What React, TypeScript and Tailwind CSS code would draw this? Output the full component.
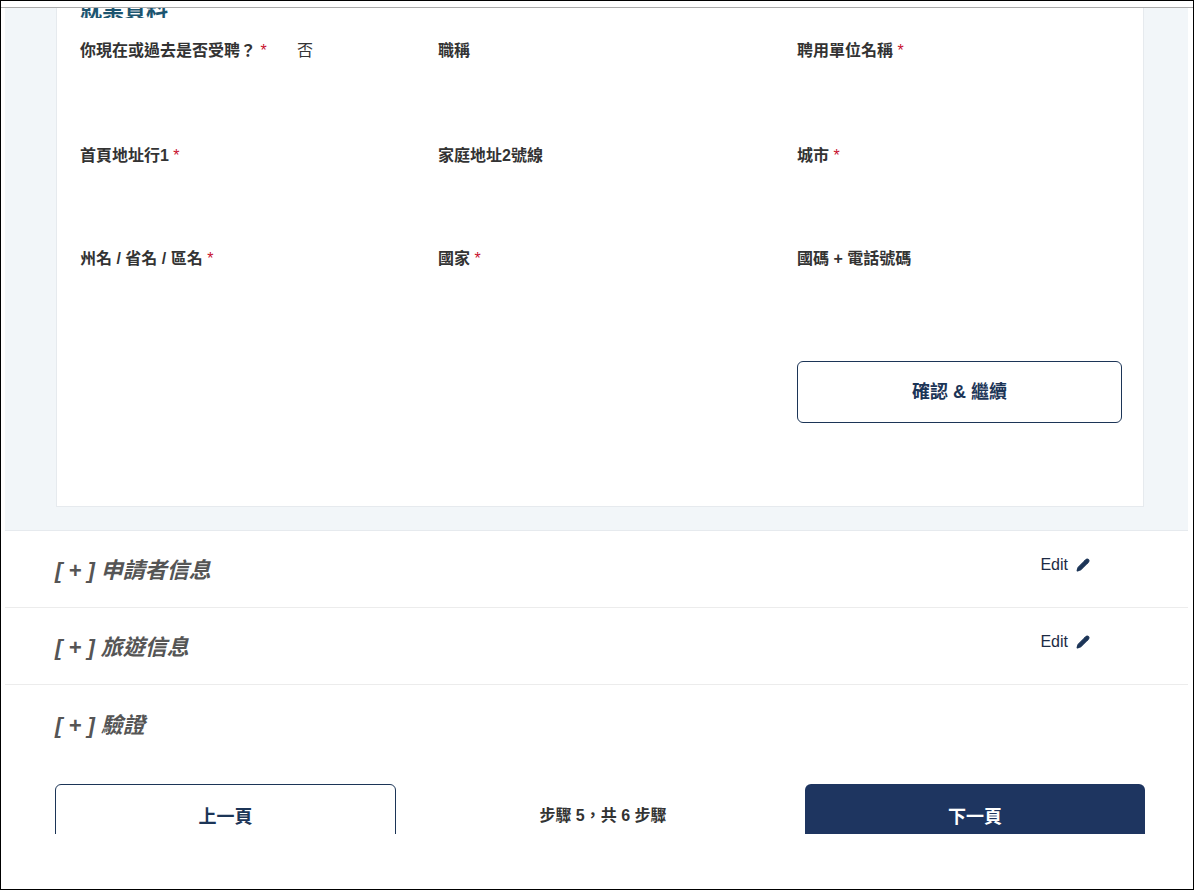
import { Pencil } from 'lucide-react';

const font = { fontFamily: '"Liberation Sans", "Noto Sans CJK TC", sans-serif' };

function Label({ text, req }: { text: string; req?: boolean }) {
  return (
    <div className="text-[16px] font-bold text-[#333] leading-[20px]">
      {text}
      {req && <span className="text-[#c8102e] font-normal"> *</span>}
    </div>
  );
}

function Section({ title, edit }: { title: string; edit?: boolean }) {
  return (
    <div className="h-[77px] border-b border-[#ececec] flex items-center justify-between pl-[50px] pr-[98px]">
      <div className="text-[22px] italic font-bold text-[#555] pt-[3px]">{title}</div>
      {edit && (
        <div className="flex items-center gap-2 text-[16px] text-[#1c2b44] -mt-[8px]">
          Edit <Pencil className="w-[14px] h-[14px] fill-[#1c3557] text-[#1c3557]" />
        </div>
      )}
    </div>
  );
}

export default function App() {
  return (
    <div style={font} className="w-[1194px] h-[890px] border border-black bg-white overflow-hidden">
      <div className="mt-[6px] border-t border-[#aaa] h-[827px] overflow-hidden pl-[4px] pr-[5px]">
        <div className="bg-[#f2f6f9] pl-[51px] pr-[44px] pb-[23px] border-b border-[#e6eaee]">
          <div className="bg-white border border-[#e6eaee] border-t-0 px-[23px] pb-[83px]">
            <div className="text-[22px] font-bold text-[#1c5570] leading-[22px] -mt-[9px] h-[19px] overflow-hidden">就業資料</div>
            <div className="grid grid-cols-[358px_359px_1fr] pt-[23px]">
              <div className="h-[105px] flex">
                <div className="w-[205px]"><Label text="你現在或過去是否受聘？" req /></div>
                <span className="text-[16px] text-[#333] leading-[20px] pl-[12px]">否</span>
              </div>
              <div><Label text="職稱" /></div>
              <div><Label text="聘用單位名稱" req /></div>
              <div className="h-[103px]"><Label text="首頁地址行1" req /></div>
              <div><Label text="家庭地址2號線" /></div>
              <div><Label text="城市" req /></div>
              <div className="h-[112px]"><Label text="州名 / 省名 / 區名" req /></div>
              <div><Label text="國家" req /></div>
              <div><Label text="國碼 + 電話號碼" /></div>
              <div />
              <div />
              <div>
                <button className="w-[325px] h-[62px] border border-[#1c3557] rounded-[6px] text-[18px] font-bold text-[#1c3557]">
                  確認 &amp; 繼續
                </button>
              </div>
            </div>
          </div>
        </div>
        <Section title="[ + ] 申請者信息" edit />
        <Section title="[ + ] 旅遊信息" edit />
        <div className="h-[77px] flex items-center pl-[50px]">
          <div className="text-[22px] italic font-bold text-[#555] pt-[3px]">[ + ] 驗證</div>
        </div>
        <div className="flex items-start justify-between pl-[50px] pr-[43px] pt-[22px]">
          <button className="w-[341px] h-[64px] border border-[#1c3557] rounded-[6px] text-[18px] font-bold text-[#1c3557] pt-[2px]">上一頁</button>
          <div className="text-[16px] font-bold text-[#333] pt-[20px] pl-[5px]">步驟 5，共 6 步驟</div>
          <button className="w-[340px] h-[64px] bg-[#1e3560] rounded-[6px] text-[18px] font-bold text-white pt-[2px]">下一頁</button>
        </div>
      </div>
    </div>
  );
}
